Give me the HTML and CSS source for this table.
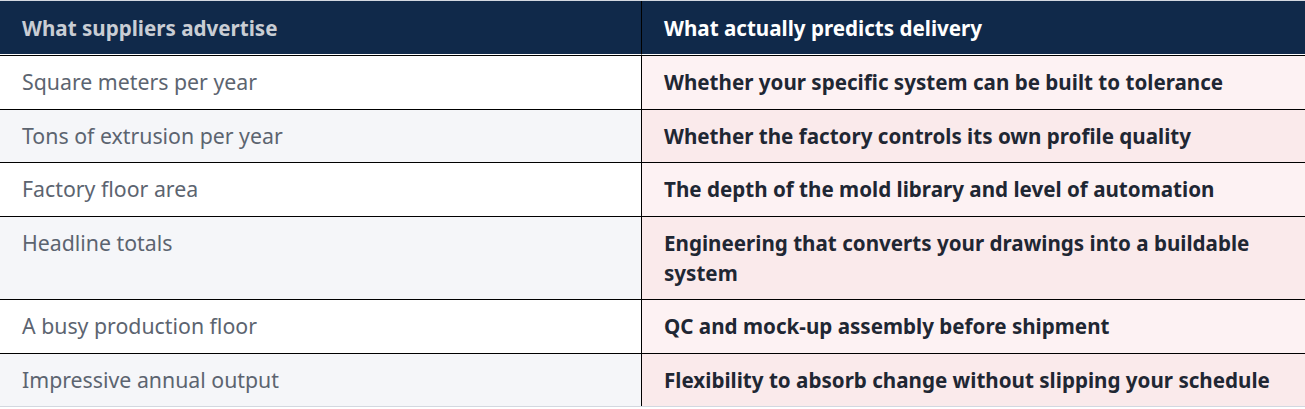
FILE: index.html
```html
<!DOCTYPE html>
<html lang="en">
<head>
<meta charset="utf-8">
<title>Suppliers vs delivery</title>
<link rel="stylesheet" href="styles.css">
</head>
<body>
<table class="cmp">
  <thead>
    <tr>
      <th class="col-a">What suppliers advertise</th>
      <th class="col-b">What actually predicts delivery</th>
    </tr>
  </thead>
  <tbody>
    <tr class="odd">
      <td class="col-a">Square meters per year</td>
      <td class="col-b">Whether your specific system can be built to tolerance</td>
    </tr>
    <tr class="even">
      <td class="col-a">Tons of extrusion per year</td>
      <td class="col-b">Whether the factory controls its own profile quality</td>
    </tr>
    <tr class="odd">
      <td class="col-a">Factory floor area</td>
      <td class="col-b">The depth of the mold library and level of automation</td>
    </tr>
    <tr class="even">
      <td class="col-a top">Headline totals</td>
      <td class="col-b">Engineering that converts your drawings into a buildable system</td>
    </tr>
    <tr class="odd">
      <td class="col-a">A busy production floor</td>
      <td class="col-b">QC and mock-up assembly before shipment</td>
    </tr>
    <tr class="even">
      <td class="col-a">Impressive annual output</td>
      <td class="col-b">Flexibility to absorb change without slipping your schedule</td>
    </tr>
  </tbody>
</table>
</body>
</html>
```

FILE: styles.css
```css
html, body {
  margin: 0;
  padding: 0;
  background: #ffffff;
}

.cmp {
  width: 1305px;
  border-collapse: separate;
  border-spacing: 0;
  font-family: "Noto Sans", "Open Sans", sans-serif;
  font-size: 21.3px;
  line-height: 30px;
  border-top: 1px solid #d3d8e0;
  border-bottom: 1px solid #d3d8e0;
  table-layout: fixed;
}

.cmp th,
.cmp td {
  box-sizing: border-box;
  text-align: left;
  vertical-align: middle;
  padding: 0 18px 0 22px;
}

.cmp th {
  background: #10294a;
  height: 54px;
  font-size: 20.6px;
  font-weight: 700;
  border-bottom: 1px solid #ffffff;
}

.cmp th.col-a {
  color: #c9cdd4;
  width: 642px;
  border-right: 1px solid #000000;
}

.cmp th.col-b {
  color: #ffffff;
}

.cmp td {
  height: 53.5px;
  border-top: 1px solid #000000;
  padding-top: 11px;
  padding-bottom: 11.5px;
}

.cmp td.col-a {
  color: #5c6470;
  border-right: 1px solid #000000;
}

.cmp td.col-a.top {
  vertical-align: top;
}

.cmp td.col-b {
  color: #1f2733;
  font-size: 20.6px;
  font-weight: 700;
}

.cmp tr.odd td.col-a { background: #ffffff; }
.cmp tr.even td.col-a { background: #f5f6f9; }
.cmp tr.odd td.col-b { background: #fdf2f3; }
.cmp tr.even td.col-b { background: #faeaeb; }
```
